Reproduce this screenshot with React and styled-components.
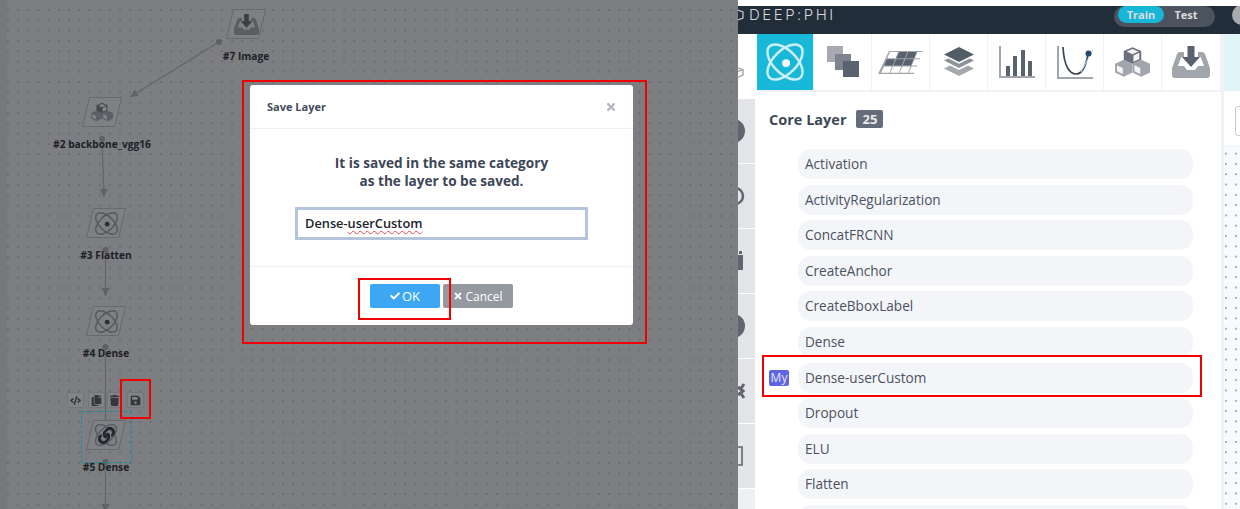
import React from "react";
import styled, { createGlobalStyle } from "styled-components";
import { FaCheck, FaCode, FaCopy, FaLink, FaSave, FaTimes, FaTrash } from "react-icons/fa";

const GlobalStyle = createGlobalStyle`
  html, body {
    margin: 0;
    padding: 0;
    background: #fff;
    font-family: "Open Sans", "Liberation Sans", sans-serif;
  }
  * { box-sizing: border-box; }
`;

const Page = styled.div`
  position: relative;
  display: flex;
  width: 1240px;
  height: 509px;
  overflow: hidden;
`;

/* ---------- canvas ---------- */
const Canvas = styled.div`
  position: relative;
  flex: 0 0 738px;
  height: 100%;
  background:
    linear-gradient(90deg, #77787a 7px, transparent 7px),
    radial-gradient(circle at 1px 1px, #6a6b6e 0.7px, transparent 1px) 7px 9px / 10.2px 10.3px,
    #7d7e81;
`;

const Edges = styled.svg`
  position: absolute;
  inset: 0;
`;

const Node = styled.div`
  position: absolute;
  left: ${(p) => p.$x}px;
  top: ${(p) => p.$y}px;
  width: 40px;
  height: 30px;
`;

const NodeIcon = styled.div`
  position: absolute;
  inset: 0;
  display: flex;
  align-items: center;
  justify-content: center;
`;

const NodeLabel = styled.div`
  position: absolute;
  left: 50%;
  top: 39px;
  transform: translateX(-50%);
  white-space: nowrap;
  font-size: 10.2px;
  line-height: 16px;
  font-weight: 700;
  color: #1c2026;
`;

const LinkBadge = styled(FaLink)`
  position: absolute;
  left: 12px;
  top: 7px;
  color: #20262e;
  font-size: 17px;
`;

const Selection = styled.div`
  position: absolute;
  left: 81px;
  top: 411px;
  width: 51px;
  height: 52px;
  border: 1px dashed #1f8a99;
`;

const NodeTools = styled.div`
  position: absolute;
  left: 67px;
  top: 392px;
  display: flex;
`;

const ToolButton = styled.div`
  display: flex;
  align-items: center;
  justify-content: center;
  width: ${(p) => p.$w || 17}px;
  height: 16px;
  margin-right: ${(p) => p.$gap || 0}px;
  background: #828386;
  border: 1px solid #747578;
  border-radius: 2px;
  color: #33373c;
  font-size: 11px;
`;

const Marker = styled.div`
  position: absolute;
  left: ${(p) => p.$x}px;
  top: ${(p) => p.$y}px;
  width: ${(p) => p.$w}px;
  height: ${(p) => p.$h}px;
  border: 2px solid #f00000;
  pointer-events: none;
`;

/* ---------- modal ---------- */
const Modal = styled.div`
  position: absolute;
  left: 250px;
  top: 85px;
  width: 383px;
  height: 240px;
  display: flex;
  flex-direction: column;
  background: #fff;
  border-radius: 3px;
`;

const ModalHeader = styled.div`
  display: flex;
  align-items: center;
  justify-content: space-between;
  height: 44px;
  padding: 0 16px 0 17px;
  border-bottom: 1px solid #eff0f3;
`;

const ModalTitle = styled.div`
  font-size: 11px;
  font-weight: 700;
  color: #444c5a;
`;

const CloseIcon = styled(FaTimes)`
  color: #b2b7c2;
  font-size: 12px;
`;

const ModalBody = styled.div`
  flex: 1;
  display: flex;
  flex-direction: column;
  align-items: center;
  padding-top: 25px;
  border-bottom: 1px solid #eff0f3;
`;

const Message = styled.div`
  font-size: 13.6px;
  line-height: 18px;
  font-weight: 700;
  color: #3c4656;
  text-align: center;
`;

const Field = styled.div`
  width: 293px;
  height: 33px;
  margin-top: 17px;
  padding-left: 7px;
  border: 3px solid #b5c3dd;
  font-size: 12.8px;
  line-height: 27px;
  font-weight: 600;
  color: #20242a;
`;

const Misspelled = styled.span`
  text-decoration: underline wavy #e2484f 1px;
  text-decoration-skip-ink: none;
  text-underline-offset: 2px;
`;

const ModalFooter = styled.div`
  display: flex;
  justify-content: center;
  gap: 3px;
  height: 58px;
  padding-top: 17px;
`;

const ActionButton = styled.div`
  display: flex;
  align-items: center;
  justify-content: center;
  gap: 2px;
  width: 70px;
  height: 24px;
  border-radius: 2px;
  background: ${(p) => (p.$primary ? "#3ea7f3" : "#94989f")};
  color: #fff;
  font-size: ${(p) => (p.$primary ? 13 : 12)}px;
  font-weight: 400;
  svg { font-size: 10px; }
`;

/* ---------- right side ---------- */
const Workspace = styled.div`
  flex: 1;
  display: flex;
  flex-direction: column;
  padding-top: 6px;
  min-width: 0;
`;

const TopBar = styled.div`
  display: flex;
  align-items: flex-start;
  flex: 0 0 28px;
  background: #222d3a;
  overflow: hidden;
`;

const Logo = styled.div`
  display: flex;
  align-items: center;
  gap: 4px;
  height: 17px;
  font-family: Inter, "Liberation Sans", sans-serif;
  font-size: 15px;
  font-weight: 300;
  letter-spacing: 2.5px;
  color: #d5d7d9;
`;

const ModeSwitch = styled.div`
  display: flex;
  align-items: center;
  width: 101px;
  height: 21px;
  margin: 0 17px 0 auto;
  padding: 0 0 4px 4px;
  background: #4c535f;
  border-radius: 11px;
  font-size: 11px;
  font-weight: 700;
  color: #d9dbde;
`;

const ModeOption = styled.div`
  display: flex;
  align-items: center;
  justify-content: center;
  width: ${(p) => (p.$on ? 46 : 44)}px;
  height: 17px;
  border-radius: 9px;
  background: ${(p) => (p.$on ? "#18b6d6" : "transparent")};
`;

const Avatar = styled.div`
  flex: 0 0 20px;
  width: 20px;
  height: 20px;
  margin-top: -1px;
  margin-right: -12px;
  border-radius: 50%;
  background: #a9abaf;
`;

const Main = styled.div`
  flex: 1;
  display: flex;
  min-height: 0;
`;

const Sidebar = styled.div`
  flex: 0 0 19px;
  display: flex;
  flex-direction: column;
  gap: 1.3px;
`;

const SideCell = styled.div`
  flex: 0 0 ${(p) => p.$h || 63.7}px;
  width: 17px;
  display: flex;
  align-items: center;
  padding-top: ${(p) => p.$pt || 0}px;
  background: ${(p) => p.$bg || "#e3e4e8"};
`;

const Center = styled.div`
  flex: 0 0 463px;
  display: flex;
  flex-direction: column;
`;

const Tabs = styled.div`
  display: flex;
  flex: 0 0 57px;
  border-bottom: 2px solid #f0f0f7;
`;

const Tab = styled.div`
  flex: 0 0 ${(p) => p.$w || 58}px;
  height: 56px;
  display: flex;
  align-items: center;
  justify-content: center;
  background: ${(p) => (p.$on ? "#17b8d8" : "#fff")};
  border-right: 1px solid #f0f0f7;
`;

const LayerPanel = styled.div`
  flex: 1;
  padding: 17px 0 0 12px;
  overflow: hidden;
`;

const PanelTitle = styled.div`
  display: flex;
  align-items: center;
  gap: 10px;
  height: 20px;
  font-size: 14.5px;
  font-weight: 700;
  color: #3d4859;
`;

const Count = styled.span`
  display: inline-block;
  width: 27px;
  height: 18px;
  border-radius: 2px;
  background: #666d7a;
  color: #e8eaee;
  font-size: 13px;
  line-height: 18px;
  text-align: center;
`;

const LayerList = styled.div`
  display: flex;
  flex-direction: column;
  gap: 5.6px;
  margin-top: 20px;
`;

const LayerRow = styled.div`
  position: relative;
  flex: 0 0 30px;
  width: 395px;
  margin-left: 29px;
  padding-left: 7px;
  border-radius: 13px;
  background: #f4f5f9;
  font-size: 13.6px;
  line-height: 30px;
  color: #4a5260;
`;

const MyBadge = styled.span`
  position: absolute;
  left: -29px;
  top: 7px;
  width: 20px;
  height: 16px;
  border-radius: 2px;
  background: #5f65e2;
  color: #e6e7fb;
  font-size: 12px;
  line-height: 16px;
  text-align: center;
`;

const InfoPanel = styled.div`
  flex: 1;
  display: flex;
  flex-direction: column;
  border-left: 3px solid #f1f1f8;
`;

const InfoHead = styled.div`
  flex: 0 0 57px;
  background: #e0f5f7;
`;

const InfoForm = styled.div`
  flex: 0 0 56px;
  padding: 15px 0 0 11px;
  border-bottom: 2px solid #f3f5f7;
`;

const InfoInput = styled.div`
  width: 40px;
  height: 30px;
  border: 1px solid #c8cacd;
  border-radius: 3px;
`;

const InfoCanvas = styled.div`
  flex: 1;
  background:
    radial-gradient(circle at 1px 1px, #a9b1b2 0.8px, transparent 1.1px) 11px 16px / 10px 10.3px,
    #f7fbfb;
`;

/* ---------- drawings ---------- */
const AtomIcon = ({ size = 30, color = "#4d5055", dot = "#2c3036", width = 1.6 }) => (
  <svg width={size} height={size} viewBox="0 0 40 40" fill="none">
    <ellipse cx="20" cy="20" rx="20" ry="10.5" transform="rotate(45 20 20)" stroke={color} strokeWidth={width * 1.33} />
    <ellipse cx="20" cy="20" rx="20" ry="10.5" transform="rotate(-45 20 20)" stroke={color} strokeWidth={width * 1.33} />
    <circle cx="21" cy="21" r="3.6" fill={dot} />
  </svg>
);

const CubesIcon = ({ size = 36, top = "#6b717c", side = "#a1a5ac", face = "#f5f5f7" }) => (
  <svg width={size} height={size * 0.9} viewBox="0 0 36 32">
    <path d="M9 14l9 4v9l-9 4.5L0 27v-9z" fill={side} />
    <path d="M27 14l9 4v9l-9 4.5-9-4.5v-9z" fill={side} />
    <path d="M2 19.500l6 2.800v6.200l-6-2.800zM20 19.500l6 2.800v6.200l-6-2.800z" fill={face} />
    <path d="M18 1l9 4v9l-9 4-9-4V5z" fill={top} />
    <path d="M12 5.500l6-2.600 6 2.600-6 2.800z" fill={face} />
    <path d="M19 9.500l6-2.800v6.400l-6 2.800z" fill={face} />
  </svg>
);

const InboxIcon = ({ size = 38, tray = "#a1a5ac", arrow = "#5a6270", face = "#fff" }) => (
  <svg width={size} height={size * 0.84} viewBox="0 0 38 32">
    <path d="M8 6h4v5H9.500L6 20h26l-3.500-9H26V6h4q2 0 3 2l5 14v7q0 3-3 3H3q-3 0-3-3v-7L5 8q1-2 3-2z" fill={tray} />
    <path d="M6 20h6l3 4h8l3-4h6l-3.500-9H9.500z" fill={face} />
    <path d="M15.500 0h7v11H28L19 21 10 11h5.500z" fill={arrow} />
  </svg>
);

const StackIcon = () => (
  <svg width="32" height="30" viewBox="0 0 32 30">
    <path d="M16 14L1 21.500 16 29l15-7.500z" fill="#a5a8af" />
    <path d="M16 6.500L1 14 16 21.500 31 14z" fill="#fff" transform="translate(0 1.500)" />
    <path d="M16 6L1 13.500 16 21l15-7.500z" fill="#8d929b" />
    <path d="M16 0L1 7.500 16 15l15-7.500z" fill="#fff" transform="translate(0 1.800)" />
    <path d="M16 0L1 7.500 16 15l15-7.500z" fill="#545c69" />
  </svg>
);

const SquaresIcon = () => (
  <svg width="32" height="32" viewBox="0 0 32 32">
    <rect x="0" y="0" width="16" height="16" fill="#a7a9b2" />
    <rect x="8" y="8" width="16" height="16" fill="#7f838f" />
    <rect x="16" y="15" width="16" height="16" fill="#5a6270" />
  </svg>
);

const GridIcon = () => {
  const dark = [[1, 0], [2, 0], [0, 1], [1, 1], [2, 1]];
  const cells = [];
  for (let r = 0; r < 3; r++) {
    for (let c = 0; c < 4; c++) {
      const on = dark.some(([x, y]) => x === c && y === r);
      const x0 = 9 - r * 3 + c * 9.200;
      const y0 = 1 + r * 7.300;
      cells.push(
        <path
          key={`${r}-${c}`}
          d={`M${x0 + 3} ${y0}h8l-2.400 6.200h-8.400z`}
          fill={on ? "#5a6270" : "#fff"}
        />
      );
    }
  }
  return (
    <svg width="45" height="23" viewBox="0 0 45 23">
      <path d="M11 0h34l-9 23H0z" fill="#a1a5ac" />
      {cells}
    </svg>
  );
};

const BarsIcon = () => (
  <svg width="36" height="32" viewBox="0 0 36 32">
    <path d="M1 0v31h35" fill="none" stroke="#a1a5ac" strokeWidth="2" />
    <rect x="7" y="20" width="4" height="10" fill="#5a6270" />
    <rect x="14" y="10" width="4" height="20" fill="#5a6270" />
    <rect x="22" y="4" width="4" height="26" fill="#5a6270" />
    <rect x="29" y="15" width="4" height="15" fill="#5a6270" />
  </svg>
);

const CurveIcon = () => (
  <svg width="36" height="33" viewBox="0 0 36 33">
    <path d="M1 0v32h35" fill="none" stroke="#a1a5ac" strokeWidth="2" />
    <path d="M6 1c1 20 7 27 13 27s10-8 12-20" fill="none" stroke="#3b4656" strokeWidth="1.700" />
    <path d="M24 26L38 0" stroke="#b9dbe8" strokeWidth="1" />
    <circle cx="31.500" cy="7.500" r="3" fill="#26456f" />
  </svg>
);

const SideGlyph = ({ kind }) => {
  const c = "#5f6670";
  return (
    <svg width="8" height="26" viewBox="0 0 8 26" fill="none">
      {kind === "hex" && <path d="M-2 8l7 3v5l-7 3M-2 13l7-2" stroke="#9a9ea5" strokeWidth="1.300" />}
      {kind === "disc" && <circle cx="-5" cy="13" r="12" fill={c} />}
      {kind === "ring" && <circle cx="-3" cy="13" r="8" stroke={c} strokeWidth="2.500" />}
      {kind === "bin" && <path d="M0 7h5v15H0zM1 3h3v3H1z" fill={c} />}
      {kind === "cross" && <path d="M0 9l5 4 -5 4M6 6l-4 6M6 20l-4-6" stroke={c} strokeWidth="3" />}
      {kind === "box" && <path d="M0 4h4v18H0" stroke={c} strokeWidth="1.600" />}
    </svg>
  );
};

const nodes = [
  { id: 7, name: "Image", x: 226, y: 9, icon: "inbox" },
  { id: 2, name: "backbone_vgg16", x: 82, y: 97, icon: "cubes" },
  { id: 3, name: "Flatten", x: 86, y: 208, icon: "atom" },
  { id: 4, name: "Dense", x: 86, y: 306, icon: "atom" },
  { id: 5, name: "Dense", x: 86, y: 420, icon: "atom", linked: true },
];

const edges = [
  { from: [219, 42], to: [130, 97] },
  { from: [102, 139], to: [104, 197] },
  { from: [105.5, 250], to: [105.5, 296] },
  { from: [105.5, 347], to: [105.5, 420], plain: true },
  { from: [105.5, 462], to: [105.5, 509], plain: true },
];

const arrowAt = ([x1, y1], [x2, y2]) => {
  const a = Math.atan2(y2 - y1, x2 - x1);
  const l = 8;
  const w = 3.800;
  const bx = x2 - l * Math.cos(a);
  const by = y2 - l * Math.sin(a);
  const nx = -Math.sin(a) * w;
  const ny = Math.cos(a) * w;
  return `${x2},${y2} ${bx + nx},${by + ny} ${bx - nx},${by - ny}`;
};

const renderNodeIcon = (n) => {
  if (n.icon === "inbox") return <InboxIcon size={25} tray="#5a5d62" arrow="#3a3d42" face="#7f8083" />;
  if (n.icon === "cubes") return <CubesIcon size={22} top="#45484d" side="#5c5f64" face="#85868a" />;
  return <AtomIcon size={n.linked ? 26 : 27} color="#55585d" dot="#2c3036" />;
};

const layers = [
  "Activation",
  "ActivityRegularization",
  "ConcatFRCNN",
  "CreateAnchor",
  "CreateBboxLabel",
  "Dense",
  "Dense-userCustom",
  "Dropout",
  "ELU",
  "Flatten",
  "",
];

const sideGlyphs = ["disc", "ring", "bin", "disc", "cross", "box"];

const App = () => {
  return (
    <Page>
      <GlobalStyle />
      <Canvas>
        <Edges width="738" height="509">
          {edges.map((e, i) => (
            <g key={i}>
              <line x1={e.from[0]} y1={e.from[1]} x2={e.to[0]} y2={e.to[1]} stroke="#636568" strokeWidth="1.300" />
              <circle cx={e.from[0]} cy={e.from[1]} r="3" fill="#5e6063" />
              {!e.plain && <polygon points={arrowAt(e.from, e.to)} fill="#606265" />}
            </g>
          ))}
          <polygon points="105.500,512 101.500,504 109.500,504" fill="#606265" />
        </Edges>
        {nodes.map((n) => (
          <Node key={n.id} $x={n.x} $y={n.y}>
            <svg width="40" height="30" viewBox="0 0 40 30">
              <polygon points="7.500,0.500 39.500,0.500 32.500,29.500 0.500,29.500" fill="#7f8083" stroke="#68696c" />
            </svg>
            <NodeIcon>{renderNodeIcon(n)}</NodeIcon>
            {n.linked && <LinkBadge />}
            <NodeLabel>
              #{n.id} {n.name}
            </NodeLabel>
          </Node>
        ))}
        <Selection />
        <NodeTools>
          <ToolButton $gap={4}><FaCode /></ToolButton>
          <ToolButton $gap={2}><FaCopy /></ToolButton>
          <ToolButton $w={15} $gap={5}><FaTrash /></ToolButton>
          <ToolButton><FaSave /></ToolButton>
        </NodeTools>
      </Canvas>

      <Workspace>
        <TopBar>
          <Logo>
            <svg width="7" height="14" viewBox="0 0 7 14">
              <path d="M-3 1l8 3v6l-8 3" fill="none" stroke="#c9cbce" strokeWidth="1.200" />
            </svg>
            DEEP:PHI
          </Logo>
          <ModeSwitch>
            <ModeOption $on>Train</ModeOption>
            <ModeOption>Test</ModeOption>
          </ModeSwitch>
          <Avatar />
        </TopBar>
        <Main>
          <Sidebar>
            <SideCell $h={64} $bg="#fff" $pt={12}><SideGlyph kind="hex" /></SideCell>
            {sideGlyphs.map((g, i) => (
              <SideCell key={i}><SideGlyph kind={g} /></SideCell>
            ))}
            <SideCell $bg="#eef0f2" />
          </Sidebar>
          <Center>
            <Tabs>
              <Tab $on $w={57}>
                <AtomIcon size={44} color="#cdeef4" dot="#ffffff" width={1.700} />
              </Tab>
              <Tab><SquaresIcon /></Tab>
              <Tab><GridIcon /></Tab>
              <Tab><StackIcon /></Tab>
              <Tab><BarsIcon /></Tab>
              <Tab><CurveIcon /></Tab>
              <Tab><CubesIcon size={35} /></Tab>
              <Tab $w={59}><InboxIcon /></Tab>
            </Tabs>
            <LayerPanel>
              <PanelTitle>
                Core Layer <Count>25</Count>
              </PanelTitle>
              <LayerList>
                {layers.map((name, i) => (
                  <LayerRow key={i}>
                    {name === "Dense-userCustom" && <MyBadge>My</MyBadge>}
                    {name}
                  </LayerRow>
                ))}
              </LayerList>
            </LayerPanel>
          </Center>
          <InfoPanel>
            <InfoHead />
            <InfoForm><InfoInput /></InfoForm>
            <InfoCanvas />
          </InfoPanel>
        </Main>
      </Workspace>

      <Modal>
        <ModalHeader>
          <ModalTitle>Save Layer</ModalTitle>
          <CloseIcon />
        </ModalHeader>
        <ModalBody>
          <Message>
            It is saved in the same category
            <br />
            as the layer to be saved.
          </Message>
          <Field>
            Dense-<Misspelled>userCustom</Misspelled>
          </Field>
        </ModalBody>
        <ModalFooter>
          <ActionButton $primary><FaCheck /> OK</ActionButton>
          <ActionButton><FaTimes />Cancel</ActionButton>
        </ModalFooter>
      </Modal>

      <Marker $x={242} $y={80} $w={405} $h={264} />
      <Marker $x={358} $y={278} $w={93} $h={42} />
      <Marker $x={120} $y={379} $w={31} $h={40} />
      <Marker $x={762} $y={355} $w={440} $h={42} />
    </Page>
  );
};

export default App;
